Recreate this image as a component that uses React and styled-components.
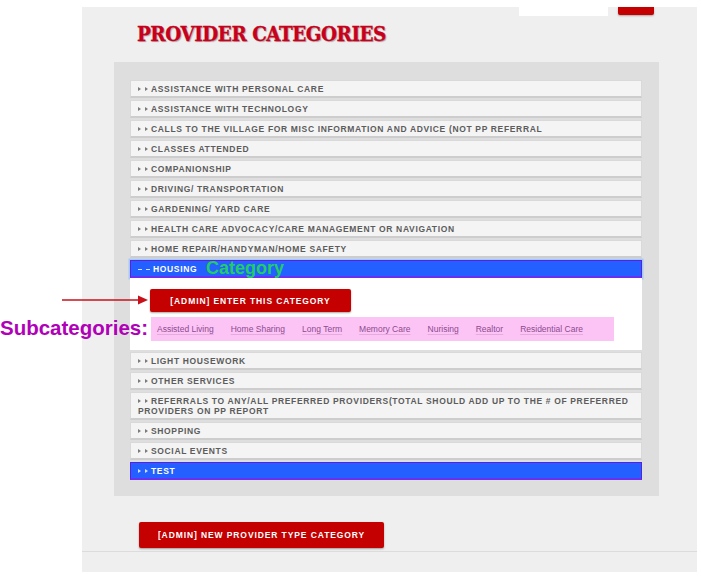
import React from "react";
import styled, { createGlobalStyle, css } from "styled-components";

const GlobalStyle = createGlobalStyle`
    html, body {
        margin: 0;
        padding: 0;
        background: #fff;
    }
`;

const categories = [
    "Assistance with personal care",
    "Assistance with technology",
    "Calls to the village for misc information and advice (not PP referral",
    "Classes attended",
    "Companionship",
    "Driving/ transportation",
    "Gardening/ yard care",
    "Health care advocacy/care management or navigation",
    "Home repair/handyman/home safety",
    { name: "Housing", open: true },
    "Light housework",
    "Other services",
    "Referrals to any/all preferred providers(total should add up to the # of preferred providers on PP report",
    "Shopping",
    "Social events",
    { name: "Test", active: true },
];

const subcategories = [
    "Assisted Living",
    "Home Sharing",
    "Long Term",
    "Memory Care",
    "Nurising",
    "Realtor",
    "Residential Care",
];

const App = () => {
    return (
        <Page>
            <GlobalStyle />
            <Panel>
                <TopBar>
                    <SearchBox />
                    <SearchButton />
                </TopBar>
                <Title>Provider Categories</Title>
                <ListWell>
                    {categories.map((c) => {
                        const item = typeof c === "string" ? { name: c } : c;
                        const highlighted = item.open || item.active;
                        return (
                            <Item key={item.name}>
                                <Header $highlighted={highlighted} $focused={item.open}>
                                    <Caret $open={item.open} />
                                    <Caret $open={item.open} $last />
                                    {item.name}
                                </Header>
                                {item.open && (
                                    <Content>
                                        <RedButton $w={201} $h={23}>[Admin] Enter this category</RedButton>
                                        <SubList>
                                            {subcategories.map((s) => (
                                                <SubLink key={s}>{s}</SubLink>
                                            ))}
                                        </SubList>
                                    </Content>
                                )}
                            </Item>
                        );
                    })}
                </ListWell>
                <Actions>
                    <RedButton $w={245} $h={26}>[Admin] New provider type category</RedButton>
                </Actions>
                <Footer />
            </Panel>

            {/* hand-drawn notes laid over the page */}
            <CategoryNote>Category</CategoryNote>
            <SubNote>Subcategories:</SubNote>
            <Arrow width="86" height="12" viewBox="0 0 86 12">
                <line x1="0" y1="6" x2="78" y2="6" stroke="#c8101a" strokeWidth="1.5" />
                <path d="M76 1.5 L86 6 L76 10.5 Z" fill="#c8101a" />
            </Arrow>
        </Page>
    );
};

export default App;

const Page = styled.div`
    position: relative;
    width: 701px;
    height: 580px;
    padding-top: 7px;
    box-sizing: border-box;
    font-family: "Liberation Sans", Arial, sans-serif;
`;

const Panel = styled.div`
    margin-left: 82px;
    width: 615px;
    background: #efefef;
    display: flex;
    flex-direction: column;
`;

const TopBar = styled.div`
    display: flex;
    justify-content: flex-end;
    align-items: flex-start;
    gap: 10px;
    height: 9px;
    padding-right: 43px;
`;

const SearchBox = styled.div`
    width: 89px;
    height: 9px;
    background: #fff;
`;

const SearchButton = styled.div`
    width: 36px;
    height: 8px;
    background: #c40000;
    border-radius: 0 0 2px 2px;
    box-shadow: 0 1px 2px rgba(0, 0, 0, 0.3);
`;

const Title = styled.h1`
    margin: 5px 0 15px 55px;
    height: 26px;
    line-height: 26px;
    font-family: "DejaVu Serif", "Liberation Serif", serif;
    font-stretch: condensed;
    font-weight: bold;
    font-size: 20.5px;
    letter-spacing: -0.5px;
    text-transform: uppercase;
    color: #c8001c;
    -webkit-text-stroke: 0.3px #c8001c;
    text-shadow: 1px 1px 1px rgba(0, 0, 0, 0.3);
`;

const ListWell = styled.div`
    margin-left: 32px;
    width: 545px;
    box-sizing: border-box;
    padding: 18px 17px 16px 16px;
    background: #dedede;
    display: flex;
    flex-direction: column;
    gap: 2px;
`;

const Item = styled.div`
    display: flex;
    flex-direction: column;
`;

const Header = styled.div`
    box-sizing: border-box;
    min-height: 18px;
    padding: 3px 5px 2px 7px;
    line-height: 10px;
    font-size: 8.5px;
    font-weight: bold;
    letter-spacing: 0.65px;
    text-transform: uppercase;
    color: #5c5c5c;
    background: #f4f4f4;
    border: 1px solid #d9d9d9;
    border-bottom: 2px solid #cdcdcd;

    ${(p) =>
        p.$highlighted &&
        css`
            color: #fff;
            background: #2360ff;
            border: 1px solid #5a1fe0;
            border-bottom: 2px solid #6a2ff0;
        `}

    ${(p) =>
        p.$focused &&
        css`
            box-shadow: 0 0 0 1.5px #a9c8f2;
        `}
`;

const Caret = styled.span`
    display: inline-block;
    vertical-align: middle;
    margin-top: -2px;
    margin-right: ${(p) => (p.$last ? "3px" : "4px")};
    width: 0;
    height: 0;
    border-top: 2px solid transparent;
    border-bottom: 2px solid transparent;
    border-left: 3px solid currentColor;
    opacity: 0.8;

    ${(p) =>
        p.$open &&
        css`
            width: 4px;
            height: 1px;
            border: none;
            background: currentColor;
            margin-top: 0;
        `}
`;

const Content = styled.div`
    background: #fff;
    padding: 11px 0 9px 20px;
    display: flex;
    flex-direction: column;
    align-items: flex-start;
    gap: 5px;
`;

const RedButton = styled.div`
    box-sizing: border-box;
    width: ${(p) => p.$w}px;
    height: ${(p) => p.$h}px;
    display: flex;
    align-items: center;
    justify-content: center;
    background: #c40000;
    border-radius: 2px;
    box-shadow: 0 1px 2px rgba(0, 0, 0, 0.35);
    color: #fff;
    font-size: 8.5px;
    font-weight: bold;
    letter-spacing: 0.9px;
    text-transform: uppercase;
`;

const SubList = styled.div`
    margin-left: 1px;
    width: 463px;
    height: 24px;
    box-sizing: border-box;
    padding-left: 6px;
    background: #fcc4f5;
    display: flex;
    align-items: center;
    gap: 17px;
`;

const SubLink = styled.span`
    font-size: 8.5px;
    color: #8c4a90;
    text-decoration: underline;
    text-decoration-color: rgba(140, 74, 144, 0.2);
    text-underline-offset: 2px;
`;

const Actions = styled.div`
    padding: 26px 0 3px 57px;
`;

const Footer = styled.div`
    height: 20px;
    border-top: 1px solid #dcdcdc;
`;

const CategoryNote = styled.span`
    position: absolute;
    left: 206px;
    top: 258px;
    font-size: 18px;
    font-weight: bold;
    color: #22cc66;
`;

const SubNote = styled.span`
    position: absolute;
    left: 0;
    top: 316px;
    font-size: 20.5px;
    font-weight: bold;
    color: #b000b8;
`;

const Arrow = styled.svg`
    position: absolute;
    left: 62px;
    top: 294px;
`;
